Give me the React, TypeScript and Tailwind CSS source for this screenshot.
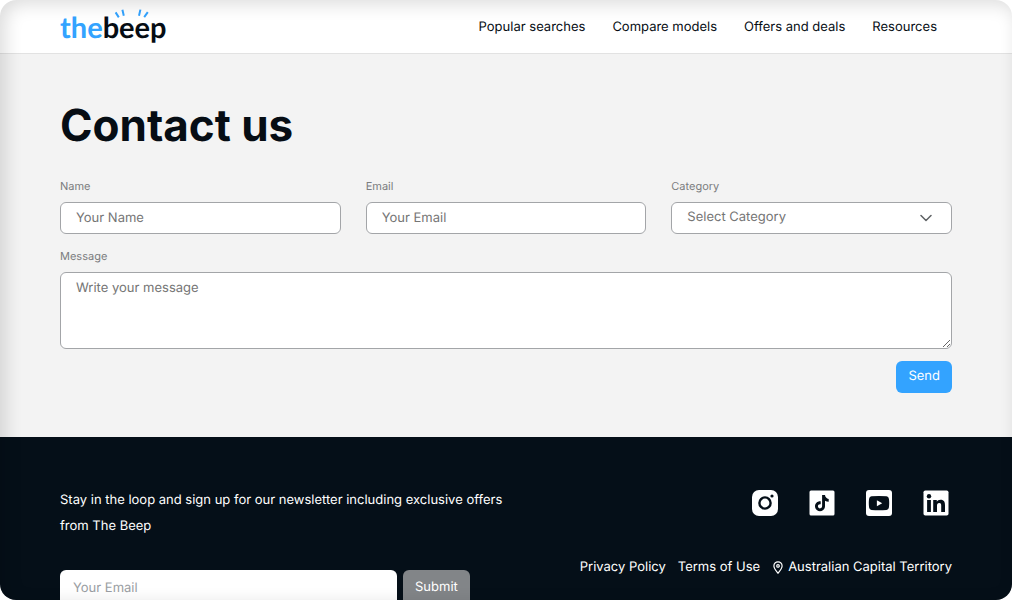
import React from "react";

const navLinks = ["Popular searches", "Compare models", "Offers and deals", "Resources"];

const fieldClass =
  "h-8 w-full rounded-md border border-[#a3a5a8] bg-white px-[15px] text-[13px] text-[#757575] placeholder:text-[#757575] outline-none [text-rendering:geometricPrecision]";
const labelClass = "text-[11px] leading-4 text-[#7b7d80]";

function Logo() {
  return (
    <a href="#home" aria-label="thebeep" className="relative flex h-full items-center pt-0.5 font-['Lato',sans-serif] text-[29px] font-bold leading-9">
      <span className="text-[#33a3ff]">the</span>
      <span className="text-[#060d14]">beep</span>
      <svg className="absolute left-[54px] top-2 h-3 w-9" viewBox="0 0 36 12" fill="none" stroke="#33a3ff" strokeWidth="2" aria-hidden="true">
        <path d="M1.6 4.4 4.8 9.4M8.4 1.8l1.4 6M26.4 1.6l-1.4 6.2M33.8 4.2l-3.6 5" />
      </svg>
    </a>
  );
}

function InstagramIcon() {
  return (
    <svg viewBox="0 0 26 26" className="size-[26px]" aria-hidden="true">
      <rect width="26" height="26" rx="7" fill="#fff" />
      <circle cx="13" cy="13" r="5.6" fill="none" stroke="#050f18" strokeWidth="2.4" />
      <circle cx="20" cy="6" r="1.6" fill="#050f18" />
    </svg>
  );
}

function TikTokIcon() {
  return (
    <svg viewBox="0 0 26 26" className="size-[26px]" aria-hidden="true">
      <rect x="0.5" y="0.5" width="25" height="25" rx="1.5" fill="#fff" />
      <path
        d="M13.1 5h2.9c.2 2 1.5 3.6 3.7 3.9v2.9c-1.4 0-2.7-.4-3.7-1.1v5.4c0 3-2.2 5.1-5 5.1s-5-2.2-5-4.9c0-3 2.5-5.3 5.7-5v3c-1.5-.4-2.8.5-2.8 2 0 1.2 1 2.1 2.1 2.1 1.3 0 2.1-1 2.1-2.3z"
        fill="#050f18"
      />
    </svg>
  );
}

function YouTubeIcon() {
  return (
    <svg viewBox="0 0 26 26" className="size-[26px]" aria-hidden="true">
      <rect width="26" height="26" rx="3" fill="#fff" />
      <path
        d="M5.5 6.3Q13 5.5 20.5 6.3 22.6 6.5 22.9 8.7 23.5 13 22.9 17.5 22.6 19.7 20.5 19.9 13 20.7 5.5 19.9 3.4 19.7 3.1 17.5 2.5 13 3.1 8.7 3.4 6.5 5.5 6.3Z"
        fill="#050f18"
      />
      <path d="m10.9 10.2 5.3 3-5.3 3z" fill="#fff" />
    </svg>
  );
}

function LinkedInIcon() {
  return (
    <svg viewBox="0 0 26 26" className="size-[26px]" aria-hidden="true">
      <rect x="0.5" y="0.5" width="25" height="25" rx="1.8" fill="#fff" />
      <circle cx="6" cy="6.2" r="2.2" fill="#050f18" />
      <path
        d="M4.1 10h3.8v12H4.1zM10.2 10h3.6v1.7c.6-1.1 1.9-2 3.7-2 3.7 0 4.5 2.4 4.5 5.6V22h-3.8v-5.9c0-1.5 0-3.2-2-3.2s-2.2 1.5-2.2 3.1v6h-3.8z"
        fill="#050f18"
      />
    </svg>
  );
}

const socials = [
  { name: "Instagram", Icon: InstagramIcon },
  { name: "TikTok", Icon: TikTokIcon },
  { name: "YouTube", Icon: YouTubeIcon },
  { name: "LinkedIn", Icon: LinkedInIcon },
];

export default function App() {
  return (
    <div className="relative flex h-screen flex-col overflow-hidden rounded-2xl bg-[#f3f3f3] font-['Inter',sans-serif] text-[13px] text-[#060d14] [text-rendering:geometricPrecision]">
      <header className="flex h-[54px] shrink-0 items-center justify-between border-b border-[#e2e2e2] bg-white pl-[60px] pr-[75px]">
        <Logo />
        <nav className="flex gap-[27px]">
          {navLinks.map((label) => (
            <a key={label} href="#nav" className="leading-5">
              {label}
            </a>
          ))}
        </nav>
      </header>

      <main className="shrink-0 px-[60px] pb-11 pt-[43px]">
        <h1 className="text-[44px] font-bold leading-[56px]">Contact us</h1>
        <form className="mt-[25px] flex flex-col">
          <div className="grid grid-cols-3 gap-x-[25px]">
            <div className="flex flex-col gap-2">
              <label htmlFor="name" className={labelClass}>Name</label>
              <input id="name" type="text" placeholder="Your Name" className={fieldClass} />
            </div>
            <div className="flex flex-col gap-2">
              <label htmlFor="email" className={labelClass}>Email</label>
              <input id="email" type="email" placeholder="Your Email" className={fieldClass} />
            </div>
            <div className="flex flex-col gap-2">
              <label htmlFor="category" className={labelClass}>Category</label>
              <div className="relative">
                <select id="category" className={`${fieldClass} appearance-none`}>
                  <option>Select Category</option>
                </select>
                <svg className="pointer-events-none absolute right-5 top-3 h-2 w-3" viewBox="0 0 12 8" fill="none" stroke="#5f6265" strokeWidth="1.5" strokeLinecap="round" strokeLinejoin="round" aria-hidden="true">
                  <path d="m1 1.5 5 5 5-5" />
                </svg>
              </div>
            </div>
          </div>
          <div className="mt-[14px] flex flex-col gap-2">
            <label htmlFor="message" className={labelClass}>Message</label>
            <textarea
              id="message"
              placeholder="Write your message"
              className="h-[77px] w-full resize rounded-md border border-[#a3a5a8] bg-white px-[15px] py-[5px] text-[13px] leading-5 placeholder:text-[#757575] outline-none [text-rendering:geometricPrecision]"
            />
          </div>
          <button type="button" className="mt-3 h-8 self-end rounded-md bg-[#33a3ff] px-3 text-white [text-rendering:geometricPrecision]">
            Send
          </button>
        </form>
      </main>

      <footer className="flex grow shrink-0 justify-between bg-[#050f18] px-[60px] pt-[50px] text-white">
        <div>
          <p className="w-[460px] leading-[26px]">
            Stay in the loop and sign up for our newsletter including exclusive offers from The Beep
          </p>
          <form className="mt-[31px] flex gap-1.5">
            <input
              id="newsletter"
              type="email"
              aria-label="Newsletter email"
              placeholder="Your Email"
              className="h-9 w-[337px] rounded-md bg-white px-[13px] text-[#060d14] placeholder:text-[#9a9ea3] outline-none [text-rendering:geometricPrecision]"
            />
            <button type="button" className="h-9 rounded-md bg-[#828588] px-3 text-white [text-rendering:geometricPrecision]">
              Submit
            </button>
          </form>
        </div>
        <div className="flex flex-col items-end pt-[3px]">
          <div className="flex gap-[31px] pr-[3px]">
            {socials.map(({ name, Icon }) => (
              <a key={name} href="#social" aria-label={name}>
                <Icon />
              </a>
            ))}
          </div>
          <div className="mt-[41px] flex gap-3 leading-5">
            <a href="#privacy">Privacy Policy</a>
            <a href="#terms">Terms of Use</a>
            <span className="flex items-center gap-1">
              <svg className="h-[13px] w-3" viewBox="0 0 12 13" fill="none" stroke="#fff" strokeWidth="1.2" aria-hidden="true">
                <path d="M6 12.2C4.5 10.2 1.9 7.5 1.9 4.9a4.1 4.1 0 0 1 8.2 0c0 2.6-2.6 5.3-4.1 7.3Z" />
                <circle cx="6" cy="4.9" r="1.3" />
              </svg>
              Australian Capital Territory
            </span>
          </div>
        </div>
      </footer>

      <div className="pointer-events-none absolute inset-0 rounded-2xl shadow-[inset_5px_4px_18px_rgba(0,0,0,0.14)]" />
    </div>
  );
}
